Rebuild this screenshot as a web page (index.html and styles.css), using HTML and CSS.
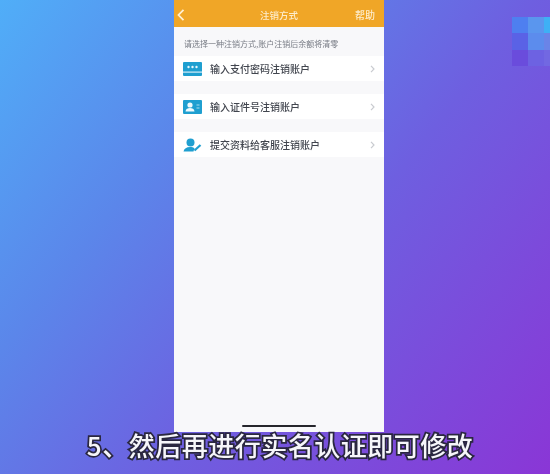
FILE: index.html
```html
<!DOCTYPE html>
<html lang="zh">
<head>
<meta charset="utf-8">
<title>注销方式</title>
<link rel="stylesheet" href="styles.css">
</head>
<body>
<div class="stage">
  <main class="phone">
    <header class="nav">
      <svg class="back" viewBox="0 0 8 12" aria-hidden="true"><path d="M6.500 .8 1.500 6l5 5.200" fill="none" stroke="#fff0d2" stroke-width="1.800"/></svg>
      <span class="nav-title">注销方式</span>
      <span class="nav-help">帮助</span>
    </header>
    <p class="notice">请选择一种注销方式,账户注销后余额将清零</p>
    <ul class="list">
      <li class="row">
        <svg class="ico" viewBox="0 0 19 14" aria-hidden="true"><rect width="19" height="14" rx="1" fill="#1f9fd0"/><rect y="9.500" width="19" height="1.200" fill="#d5eef8"/><circle cx="5.500" cy="5" r="1.200" fill="#e6f6fc"/><circle cx="9.500" cy="5" r="1.200" fill="#e6f6fc"/><circle cx="13.500" cy="5" r="1.200" fill="#e6f6fc"/></svg>
        <span class="label">输入支付密码注销账户</span>
        <svg class="chev" viewBox="0 0 5 8" aria-hidden="true"><path d="M1 .8 4 4 1 7.200" fill="none" stroke="#c9cbd0" stroke-width="1.200"/></svg>
      </li>
      <li class="row">
        <svg class="ico" viewBox="0 0 19 14" aria-hidden="true"><rect width="19" height="14" rx="1" fill="#1f9fd0"/><circle cx="7" cy="5" r="2.600" fill="#f0fafd"/><path d="M2.500 11.500c.3-2.800 2.200-3.600 4.500-3.600s4.200.8 4.500 3.600z" fill="#f0fafd"/><rect x="13.500" y="4.500" width="3" height="1" fill="#a9dcee"/><rect x="13.500" y="7.500" width="3" height="1" fill="#a9dcee"/></svg>
        <span class="label">输入证件号注销账户</span>
        <svg class="chev" viewBox="0 0 5 8" aria-hidden="true"><path d="M1 .8 4 4 1 7.200" fill="none" stroke="#c9cbd0" stroke-width="1.200"/></svg>
      </li>
      <li class="row">
        <svg class="ico" viewBox="0 0 19 14" aria-hidden="true"><circle cx="7.500" cy="4.500" r="4" fill="#1f9fd0"/><path d="M.5 13.500c.6-3 3-4.500 6.500-4.500 2 0 3.500.4 4.500 1.200l-1 3.300z" fill="#1f9fd0"/><path d="M11.500 12.500 17.500 7" stroke="#1f9fd0" stroke-width="2.200"/></svg>
        <span class="label">提交资料给客服注销账户</span>
        <svg class="chev" viewBox="0 0 5 8" aria-hidden="true"><path d="M1 .8 4 4 1 7.200" fill="none" stroke="#c9cbd0" stroke-width="1.200"/></svg>
      </li>
    </ul>
  </main>
  <div class="home-bar"></div>
  <div class="mosaic" aria-hidden="true">
    <i class="m1"></i><i class="m2"></i><i class="m3"></i>
    <i class="m4"></i><i class="m5"></i><i class="m6"></i>
    <i class="m7"></i><i class="m8"></i><i class="m9"></i>
  </div>
  <div class="caption">5、然后再进行实名认证即可修改</div>
</div>
</body>
</html>
```
FILE: styles.css
```css
* { box-sizing: border-box; margin: 0; padding: 0; }
html, body { width: 550px; height: 474px; overflow: hidden; }
body { font-family: "Noto Sans CJK SC", "Liberation Sans", sans-serif; }

.stage {
  position: relative;
  width: 550px;
  height: 474px;
  padding-left: 174px;
  background: linear-gradient(128deg, #50aef8 0%, #5b86ea 30%, #6e5fe0 58%, #8a36d6 100%);
  overflow: hidden;
}

.phone {
  width: 210px;
  height: 432px;
  background: #f8f8fa;
  display: flex;
  flex-direction: column;
}

.nav {
  height: 27px;
  flex: none;
  background: #f0a627;
  display: grid;
  grid-template-columns: 1fr auto 1fr;
  align-items: center;
  padding: 3px 9px 0 3px;
  color: #fdeccb;
  filter: blur(0.35px);
}
.back { width: 8px; height: 12px; }
.nav-title { font-size: 9.500px; line-height: 12px; font-weight: 500; padding-left: 6px; }
.nav-help { justify-self: end; font-size: 10px; line-height: 12px; font-weight: 500; }

.notice {
  height: 29px;
  padding: 10px 0 0 10px;
  font-size: 8px;
  line-height: 14px;
  color: #777b84;
  white-space: nowrap;
  filter: blur(0.3px);
}

.list {
  list-style: none;
  display: flex;
  flex-direction: column;
  gap: 13px;
}
.row {
  height: 25px;
  background: #fff;
  display: flex;
  align-items: center;
  padding: 0 9px 0 9px;
}
.ico { width: 19px; height: 14px; flex: none; }
.label {
  flex: 1;
  margin-left: 8px;
  font-size: 10px;
  line-height: 14px;
  font-weight: 500;
  color: #41454e;
  white-space: nowrap;
  filter: blur(0.3px);
}
.chev { width: 5px; height: 8px; flex: none; }

.home-bar {
  position: absolute;
  left: 242px;
  top: 425px;
  width: 74px;
  height: 2px;
  border-radius: 1px;
  background: #26262c;
}

.mosaic {
  position: absolute;
  left: 512px;
  top: 17px;
  display: grid;
  grid-template-columns: 16px 16px 6px;
  grid-template-rows: 16px 17px 16px;
}
.m1 { background: #4e7ff0; }
.m2 { background: #5a96ee; }
.m3 { background: #3eb0f5; }
.m4 { background: #5a62e6; }
.m5 { background: #5c8ced; }
.m6 { background: #6a84e8; }
.m7 { background: #6a4cdc; }
.m8 { background: #6d62e2; }
.m9 { background: #7268e2; }

.caption {
  position: absolute;
  left: 0;
  right: 0;
  top: 426px;
  padding-left: 10px;
  text-align: center;
  font-size: 26px;
  line-height: 38px;
  letter-spacing: 0.5px;
  font-weight: 500;
  color: #f6f6fa;
  -webkit-text-stroke: 3.500px #2a2740;
  paint-order: stroke fill;
  white-space: nowrap;
  filter: blur(0.4px);
}
```
